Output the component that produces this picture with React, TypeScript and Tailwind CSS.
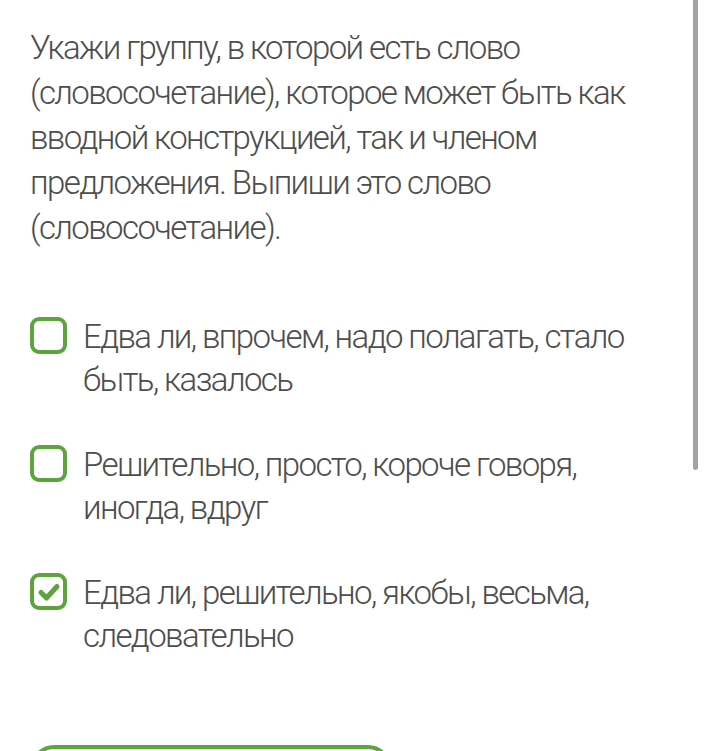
const options = [
  { text: "Едва ли, впрочем, надо полагать, стало быть, казалось", checked: false },
  { text: "Решительно, просто, короче говоря, иногда, вдруг", checked: false },
  { text: "Едва ли, решительно, якобы, весьма, следовательно", checked: true },
];

export default function App() {
  return (
    <div className="relative h-[751px] w-[704px] overflow-hidden bg-white font-['Roboto',sans-serif] font-light text-[#4d4d4d]">
      <div className="absolute right-[6px] top-0 h-[470px] w-[5px] rounded-b bg-[#a3a3a3]" />
      <div className="px-[30px] pt-[25px]">
        <p className="w-[650px] text-[33px] leading-[45px] tracking-[-1.6px]">
          Укажи группу, в которой есть слово (словосочетание), которое может быть как вводной
          конструкцией, так и членом предложения. Выпиши это слово (словосочетание).
        </p>
        <div className="mt-[65px] flex flex-col gap-[42px]">
          {options.map((o) => (
            <div key={o.text} className="flex items-start gap-[16px]">
              <div className="mt-[2px] flex h-[37px] w-[37px] shrink-0 items-center justify-center rounded-[9px] border-[4px] border-[#5ea43c]">
                {o.checked && (
                  <svg width="24" height="24" viewBox="0 0 24 24">
                    <path
                      d="M4 12.5 L9.5 18 L20 6.5"
                      fill="none"
                      stroke="#5ea43c"
                      strokeWidth="5"
                      strokeLinecap="round"
                      strokeLinejoin="round"
                    />
                  </svg>
                )}
              </div>
              <span className="w-[570px] text-[33px] leading-[43px] tracking-[-1.6px]">{o.text}</span>
            </div>
          ))}
        </div>
        <div className="mt-[88px] h-[50px] w-[362px] rounded-[24px] border-[4px] border-[#5ea43c]" />
      </div>
    </div>
  );
}
